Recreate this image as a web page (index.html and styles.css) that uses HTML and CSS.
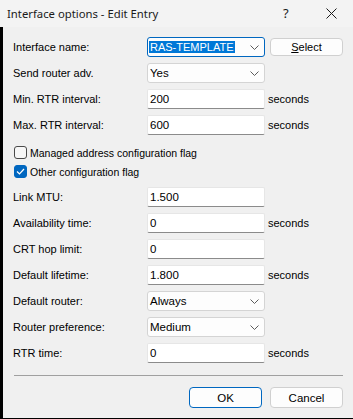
FILE: index.html
```html
<!DOCTYPE html>
<html lang="en">
<head>
    <meta charset="UTF-8">
    <title>Interface options - Edit Entry</title>
    <link rel="stylesheet" href="styles.css">
</head>
<body>
    <div class="dialog">
        <div class="titlebar">
            <span class="title">Interface options - Edit Entry</span>
            <span class="help">?</span>
            <span class="close">
                <svg width="11" height="11" viewBox="0 0 11 11"><path d="M0.5 0.5 L10.5 10.5 M10.5 0.5 L0.5 10.5" stroke="#1a1a1a" stroke-width="1"/></svg>
            </span>
        </div>

        <div class="dialog-body">
            <div class="field-row">
                <span class="field-label">Interface name:</span>
                <div class="combo combo-focus">
                    <span class="combo-value selected">RAS-TEMPLATE</span>
                    <svg class="chevron" width="9" height="5" viewBox="0 0 9 5"><path d="M0.5 0.5 L4.5 4.5 L8.5 0.5" fill="none" stroke="#5c5c5c" stroke-width="1"/></svg>
                </div>
                <button class="btn btn-select"><u>S</u>elect</button>
            </div>
            <div class="field-row">
                <span class="field-label">Send router adv.</span>
                <div class="combo">
                    <span class="combo-value">Yes</span>
                    <svg class="chevron" width="9" height="5" viewBox="0 0 9 5"><path d="M0.5 0.5 L4.5 4.5 L8.5 0.5" fill="none" stroke="#5c5c5c" stroke-width="1"/></svg>
                </div>
            </div>
            <div class="field-row">
                <span class="field-label">Min. RTR interval:</span>
                <div class="text-input">200</div>
                <span class="unit">seconds</span>
            </div>
            <div class="field-row">
                <span class="field-label">Max. RTR interval:</span>
                <div class="text-input">600</div>
                <span class="unit">seconds</span>
            </div>

            <div class="check-group">
                <div class="check-row">
                    <span class="checkbox"></span>
                    <span class="check-label">Managed address configuration flag</span>
                </div>
                <div class="check-row">
                    <span class="checkbox checked">
                        <svg width="9" height="7" viewBox="0 0 9 7"><path d="M1 3.5 L3.5 6 L8 1" fill="none" stroke="#fff" stroke-width="1.2"/></svg>
                    </span>
                    <span class="check-label">Other configuration flag</span>
                </div>
            </div>

            <div class="field-row">
                <span class="field-label">Link MTU:</span>
                <div class="text-input">1.500</div>
            </div>
            <div class="field-row">
                <span class="field-label">Availability time:</span>
                <div class="text-input">0</div>
                <span class="unit">seconds</span>
            </div>
            <div class="field-row">
                <span class="field-label">CRT hop limit:</span>
                <div class="text-input">0</div>
            </div>
            <div class="field-row">
                <span class="field-label">Default lifetime:</span>
                <div class="text-input">1.800</div>
                <span class="unit">seconds</span>
            </div>
            <div class="field-row">
                <span class="field-label">Default router:</span>
                <div class="combo">
                    <span class="combo-value">Always</span>
                    <svg class="chevron" width="9" height="5" viewBox="0 0 9 5"><path d="M0.5 0.5 L4.5 4.5 L8.5 0.5" fill="none" stroke="#5c5c5c" stroke-width="1"/></svg>
                </div>
            </div>
            <div class="field-row">
                <span class="field-label">Router preference:</span>
                <div class="combo">
                    <span class="combo-value">Medium</span>
                    <svg class="chevron" width="9" height="5" viewBox="0 0 9 5"><path d="M0.5 0.5 L4.5 4.5 L8.5 0.5" fill="none" stroke="#5c5c5c" stroke-width="1"/></svg>
                </div>
            </div>
            <div class="field-row">
                <span class="field-label">RTR time:</span>
                <div class="text-input">0</div>
                <span class="unit">seconds</span>
            </div>

            <div class="separator"></div>

            <div class="actions">
                <button class="btn btn-default">OK</button>
                <button class="btn">Cancel</button>
            </div>
        </div>
    </div>
</body>
</html>
```

FILE: styles.css
```css
html, body {
    margin: 0;
    padding: 0;
}

body {
    width: 353px;
    height: 419px;
    overflow: hidden;
    background-color: #f0f0f0;
    font-family: "Liberation Sans", Arial, sans-serif;
    font-size: 11px;
    color: #000;
}

.dialog {
    display: flex;
    flex-direction: column;
    width: 353px;
    height: 419px;
}

.titlebar {
    display: flex;
    align-items: center;
    height: 27px;
    flex-shrink: 0;
    background-color: #f3f3f3;
    padding-left: 7px;
    box-sizing: border-box;
}

.title {
    font-family: "Noto Sans", sans-serif;
    font-size: 11.3px;
    color: #1a1a1a;
    flex-grow: 1;
    padding-bottom: 1px;
}

.help {
    font-family: "Noto Sans", sans-serif;
    font-size: 13px;
    color: #1a1a1a;
    width: 10px;
    margin-right: 33px;
    padding-bottom: 2px;
}

.close {
    display: flex;
    width: 11px;
    margin-right: 16px;
    padding-bottom: 1px;
}

.dialog-body {
    flex-grow: 1;
    display: flex;
    flex-direction: column;
    gap: 6px;
    border-left: 3px solid #000;
    border-bottom: 1px solid #000;
    padding: 10px 10px 0 10px;
}

.field-row {
    display: grid;
    grid-template-columns: 134px 118px auto;
    align-items: center;
    height: 20px;
}

.field-label {
    white-space: nowrap;
}

.text-input {
    height: 20px;
    box-sizing: border-box;
    background-color: #fff;
    border: 1px solid #e6e6e6;
    border-bottom: 1px solid #8b8b8b;
    border-radius: 2px;
    padding: 0 4px 0 2px;
    display: flex;
    align-items: center;
    font-size: 11.5px;
}

.combo {
    height: 20px;
    box-sizing: border-box;
    background-color: #fdfdfd;
    border: 1px solid #d4d4d4;
    border-radius: 3px;
    display: flex;
    align-items: center;
    justify-content: space-between;
    padding: 0 5px 0 2px;
    font-size: 11.5px;
}

.combo-focus {
    border-color: #0067c0;
}

.combo-value.selected {
    font-size: 11px;
    background-color: #0078d7;
    color: #fff;
    padding: 0 1px;
    margin-left: -1px;
}

.chevron {
    display: block;
}

.unit {
    padding-left: 3px;
    font-size: 11px;
}

.btn {
    font-family: "Liberation Sans", Arial, sans-serif;
    font-size: 11.5px;
    color: #000;
    background-color: #fdfdfd;
    border: 1px solid #d0d0d0;
    border-radius: 4px;
    height: 20px;
    width: 73px;
    padding: 0;
    box-sizing: border-box;
}

.btn-select {
    margin-left: 5px;
    height: 18px;
    font-size: 11px;
}

.btn-default {
    border-color: #0067c0;
}

.check-group {
    display: flex;
    flex-direction: column;
    margin-top: 2px;
}

.check-row {
    display: flex;
    align-items: center;
    height: 19px;
    padding-left: 1px;
}

.checkbox {
    width: 13px;
    height: 13px;
    box-sizing: border-box;
    border: 1px solid #4a4a4a;
    border-radius: 3px;
    background-color: #f7f7f7;
    margin-right: 3px;
    display: flex;
    align-items: center;
    justify-content: center;
}

.checkbox.checked {
    background-color: #0067c0;
    border-color: #0067c0;
}

.checkbox svg {
    display: block;
}

.check-label {
    font-size: 10.5px;
    white-space: nowrap;
}

.separator {
    height: 1px;
    background-color: #a0a0a0;
    margin: 6px 0 5px 1px;
}

.actions {
    display: flex;
    justify-content: flex-end;
    gap: 8px;
}

.actions .btn {
    height: 21px;
}
```
